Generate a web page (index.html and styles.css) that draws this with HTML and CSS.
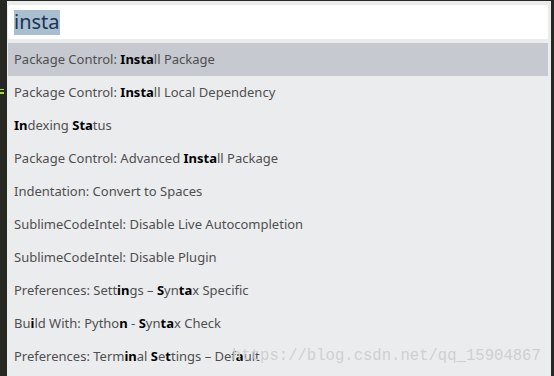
FILE: index.html
```html
<!DOCTYPE html>
<html lang="en">
<head>
    <meta charset="UTF-8" />
    <title>Command Palette</title>
    <link rel="stylesheet" href="styles.css">
</head>
<body>
    <div class="gutter"><span class="mark"></span></div>
    <div class="palette">
        <div class="search"><span class="query">insta</span></div>
        <ul class="results">
            <li class="selected">Package Control: <b>Insta</b>ll Package</li>
            <li>Package Control: <b>Insta</b>ll Local Dependency</li>
            <li><b>In</b>dexing <b>Sta</b>tus</li>
            <li>Package Control: Advanced <b>Insta</b>ll Package</li>
            <li>Indentation: Convert to Spaces</li>
            <li>SublimeCodeIntel: Disable Live Autocompletion</li>
            <li>SublimeCodeIntel: Disable Plugin</li>
            <li>Preferences: Sett<b>in</b>gs – <b>S</b>yn<b>ta</b>x Specific</li>
            <li>Bu<b>i</b>ld With: Pytho<b>n</b> - <b>S</b>yn<b>ta</b>x Check</li>
            <li>Preferences: Term<b>in</b>al <b>S</b>e<b>t</b>tings – Def<b>a</b>ult</li>
        </ul>
        <div class="watermark">https://blog.csdn.net/qq_15904867</div>
    </div>
</body>
</html>
```

FILE: styles.css
```css
body {
    margin: 0;
    height: 376px;
    overflow: hidden;
    background-color: #272822;
    display: flex;
    font-family: "Segoe UI", "Noto Sans", sans-serif;
}
.gutter {
    width: 7px;
    position: relative;
}
.mark {
    position: absolute;
    left: 0;
    top: 89px;
    width: 4px;
    height: 2px;
    border-bottom: 2px solid #a6e22e;
    border-top: 1px solid #a6e22e;
}
.palette {
    position: relative;
    width: 544px;
    margin-top: 1px;
    padding: 4px 3px 0 1px;
    box-sizing: border-box;
    background-color: #ebecee;
}
.search {
    height: 34px;
    background: #ffffff;
    border-radius: 2px;
    padding: 5px 6px;
    box-sizing: border-box;
}
.query {
    display: inline-block;
    height: 25px;
    line-height: 24px;
    font-size: 20px;
    color: #1e3355;
    background-color: #a9bfcf;
}
.results {
    list-style: none;
    margin: 4px 0 0;
    padding: 0;
}
.results li {
    height: 33px;
    line-height: 33px;
    padding-left: 6px;
    font-size: 13px;
    color: #4f4f4f;
    white-space: nowrap;
}
.results li b {
    color: #000;
}
.results li.selected {
    background-color: #c6c9d0;
}
.watermark {
    position: absolute;
    left: 225px;
    top: 346px;
    font-family: "Liberation Mono", monospace;
    font-size: 15.6px;
    color: #cfd0d2;
    white-space: nowrap;
}
```
